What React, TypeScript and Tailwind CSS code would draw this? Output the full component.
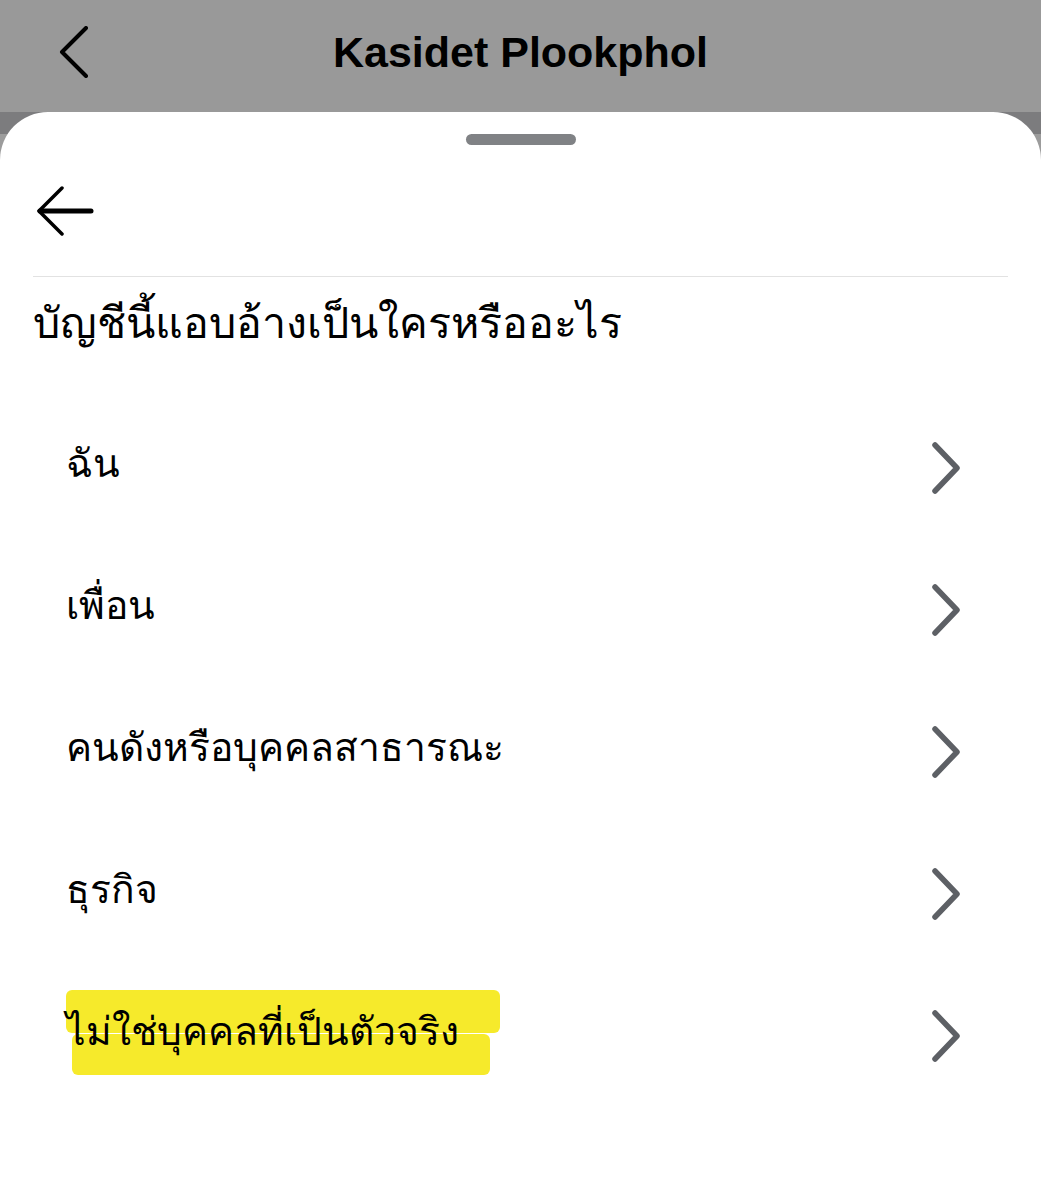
import React from "react";

const items = [
  "ฉัน",
  "เพื่อน",
  "คนดังหรือบุคคลสาธารณะ",
  "ธุรกิจ",
  "ไม่ใช่บุคคลที่เป็นตัวจริง",
];

function Chevron() {
  return (
    <svg width="30" height="52" viewBox="0 0 30 52" fill="none">
      <path
        d="M4 3 L26 26 L4 49"
        stroke="#5d6065"
        strokeWidth="5.5"
        strokeLinecap="round"
        strokeLinejoin="round"
      />
    </svg>
  );
}

export default function App() {
  return (
    <div className="w-[1041px] h-[1200px] overflow-hidden bg-[#999999] font-['Noto_Sans','Liberation_Sans',sans-serif]">
      {/* top bar behind the sheet */}
      <header className="grid h-[112px] grid-cols-[1fr_auto_1fr] items-center">
        <div className="pl-[58px] pb-[8px]">
          <svg width="32" height="52" viewBox="0 0 32 52" fill="none">
            <path
              d="M28 2 L4 26 L28 50"
              stroke="#000"
              strokeWidth="4"
              strokeLinecap="round"
              strokeLinejoin="round"
            />
          </svg>
        </div>
        <h1 className="pb-[8px] font-['Liberation_Sans',sans-serif] text-[43px] font-bold text-black">
          Kasidet Plookphol
        </h1>
        <div />
      </header>

      <div className="bg-[linear-gradient(to_bottom,#7c7c7e_0px,#7c7c7e_22px,#9c9c9c_22px)]">
        <div className="h-[1088px] rounded-t-[48px] bg-white">
          <div className="flex justify-center pt-[22px]">
            <div className="h-[11px] w-[110px] rounded-full bg-[#808285]" />
          </div>

          <div className="mt-[41px] pl-[36px]">
            <svg width="60" height="50" viewBox="0 0 60 50" fill="none">
              <path
                d="M26 2 L3 25 L26 48"
                stroke="#000"
                strokeWidth="3.5"
                strokeLinecap="round"
                strokeLinejoin="round"
              />
              <path d="M4 25 H55" stroke="#000" strokeWidth="5" strokeLinecap="round" />
            </svg>
          </div>

          <div className="mx-[33px] mt-[40px] border-t border-[#e2e2e2]" />

          <h2 className="mt-[20px] pl-[33px] text-[43px] leading-[50px] text-black">
            บัญชีนี้แอบอ้างเป็นใครหรืออะไร
          </h2>

          <ul className="mt-[50px]">
            {items.map((label, i) => (
              <li
                key={label}
                className="relative flex h-[142px] items-center justify-between pl-[66px] pr-[80px]"
              >
                {i === items.length - 1 && (
                  <>
                    {/* marker highlight drawn over the screenshot */}
                    <span className="absolute left-[66px] top-[25px] h-[43px] w-[434px] rounded-[6px] bg-[#f6ea2b]" />
                    <span className="absolute left-[72px] top-[69px] h-[41px] w-[418px] rounded-[6px] bg-[#f6ea2b]" />
                  </>
                )}
                <span className="relative pb-[12px] text-[39px] leading-[50px] text-black">
                  {label}
                </span>
                <Chevron />
              </li>
            ))}
          </ul>
        </div>
      </div>
    </div>
  );
}
